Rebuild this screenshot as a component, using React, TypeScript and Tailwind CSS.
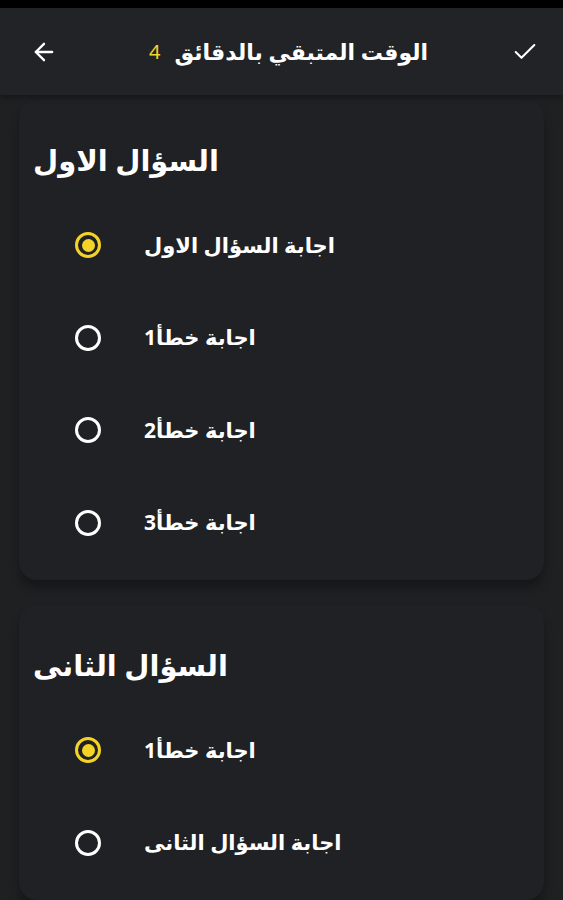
import { ArrowLeft, Check } from "lucide-react";

const questions = [
  {
    title: "السؤال الاول",
    answers: ["اجابة السؤال الاول", "اجابة خطأ1", "اجابة خطأ2", "اجابة خطأ3"],
    selected: 0,
  },
  {
    title: "السؤال الثانى",
    answers: ["اجابة خطأ1", "اجابة السؤال الثانى"],
    selected: 0,
  },
];

const Radio = ({ checked }: { checked: boolean }) =>
  checked ? (
    <span className="flex h-[26px] w-[26px] shrink-0 items-center justify-center rounded-full border-[3px] border-[#f5d326]">
      <span className="h-[13px] w-[13px] rounded-full bg-[#f5d326]" />
    </span>
  ) : (
    <span className="h-[26px] w-[26px] shrink-0 rounded-full border-[3px] border-white" />
  );

export default function App() {
  return (
    <div
      className="h-[900px] w-[563px] overflow-hidden bg-[#1f2022] text-white"
      style={{ fontFamily: '"Noto Sans", "DejaVu Sans", sans-serif' }}
    >
      <div className="h-[8px] bg-black" />
      <header className="relative z-10 flex h-[87px] items-center justify-between bg-[#222326] pl-[30px] pr-[24px] shadow-[0_2px_6px_rgba(0,0,0,0.35)]">
        <ArrowLeft className="h-7 w-7" strokeWidth={2} />
        <div dir="rtl" className="flex items-center gap-[14px] pl-[8px] text-[22px] font-bold">
          <span>الوقت المتبقي بالدقائق</span>
          <span className="text-[20px] font-normal text-[#f5d326]">4</span>
        </div>
        <Check className="h-7 w-7" strokeWidth={1.75} />
      </header>

      <div className="flex flex-col gap-[25px] px-[19px] pt-[5px]">
        {questions.map((q, qi) => (
          <section
            key={qi}
            className="rounded-[18px] bg-[#202124] pb-[11px] shadow-[0_8px_10px_rgba(0,0,0,0.3)]"
          >
            <h2 dir="rtl" className="flex h-[99px] items-center justify-end px-[14px] pt-[21px] text-[29px] font-bold">
              {q.title}
            </h2>
            {q.answers.map((a, ai) => (
              <div key={ai} className="flex h-[92.5px] items-center gap-[43px] pl-[56px]">
                <Radio checked={ai === q.selected} />
                <span dir="rtl" className="text-[21px] font-bold">
                  {a}
                </span>
              </div>
            ))}
          </section>
        ))}
      </div>
    </div>
  );
}
